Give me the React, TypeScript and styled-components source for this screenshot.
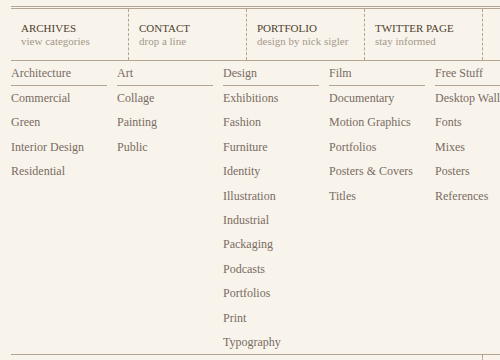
import styled, { createGlobalStyle } from "styled-components";

const GlobalStyle = createGlobalStyle`
  html, body {
    margin: 0;
    padding: 0;
    background: #f8f4ec;
    overflow: hidden;
  }
  body {
    font-family: "Liberation Serif", "Times New Roman", serif;
  }
`;

const nav = [
  { title: "ARCHIVES", sub: "view categories" },
  { title: "CONTACT", sub: "drop a line" },
  { title: "PORTFOLIO", sub: "design by nick sigler" },
  { title: "TWITTER PAGE", sub: "stay informed" },
];

const categories = [
  { name: "Architecture", items: ["Commercial", "Green", "Interior Design", "Residential"] },
  { name: "Art", items: ["Collage", "Painting", "Public"] },
  {
    name: "Design",
    items: [
      "Exhibitions",
      "Fashion",
      "Furniture",
      "Identity",
      "Illustration",
      "Industrial",
      "Packaging",
      "Podcasts",
      "Portfolios",
      "Print",
      "Typography",
    ],
  },
  { name: "Film", items: ["Documentary", "Motion Graphics", "Portfolios", "Posters & Covers", "Titles"] },
  { name: "Free Stuff", items: ["Desktop Wallpapers", "Fonts", "Mixes", "Posters", "References"] },
];

const App = () => {
  return (
    <Page>
      <GlobalStyle />
      <TopRule />
      <Nav>
        {nav.map((n) => (
          <NavItem key={n.title}>
            <NavTitle>{n.title}</NavTitle>
            <NavSub>{n.sub}</NavSub>
          </NavItem>
        ))}
      </Nav>
      <Columns>
        {categories.map((c) => (
          <Column key={c.name}>
            <ColumnHead>{c.name}</ColumnHead>
            <List>
              {c.items.map((i) => (
                <li key={i}>{i}</li>
              ))}
            </List>
          </Column>
        ))}
      </Columns>
      <Footer>
        <FooterTick />
      </Footer>
    </Page>
  );
};

const Page = styled.div`
  width: 560px;
  padding-left: 11px;
  padding-top: 6px;
`;

const TopRule = styled.div`
  height: 1px;
  border-top: 1px solid #b5a590;
  border-bottom: 1px solid #b5a590;
`;

const Nav = styled.div`
  display: flex;
  height: 51px;
  border-bottom: 1px solid #b5a590;
`;

const NavItem = styled.div`
  width: 107px;
  padding: 13px 0 0 10px;
  border-right: 1px dashed #b5a590;
  white-space: nowrap;
`;

const NavTitle = styled.div`
  font-size: 11px;
  line-height: 13px;
  color: #4f3e2f;
`;

const NavSub = styled.div`
  font-size: 11px;
  line-height: 12px;
  color: #a5978a;
`;

const Columns = styled.div`
  display: flex;
  gap: 10px;
  height: 293px;
`;

const Column = styled.div`
  width: 96px;
  flex: none;
`;

const ColumnHead = styled.div`
  font-size: 12px;
  line-height: 24px;
  color: #7a6b62;
  border-bottom: 1px solid #b5a590;
  white-space: nowrap;
`;

const List = styled.ul`
  list-style: none;
  margin: 0;
  padding: 0;
  font-size: 12px;
  line-height: 24.4px;
  color: #7a6b62;
  white-space: nowrap;

  li {
    margin: 0;
  }
`;

const Footer = styled.div`
  border-top: 1px solid #b5a590;
  height: 10px;
`;

const FooterTick = styled.div`
  margin-left: 471px;
  width: 0;
  height: 10px;
  border-left: 1px dashed #b5a590;
`;

export default App;
